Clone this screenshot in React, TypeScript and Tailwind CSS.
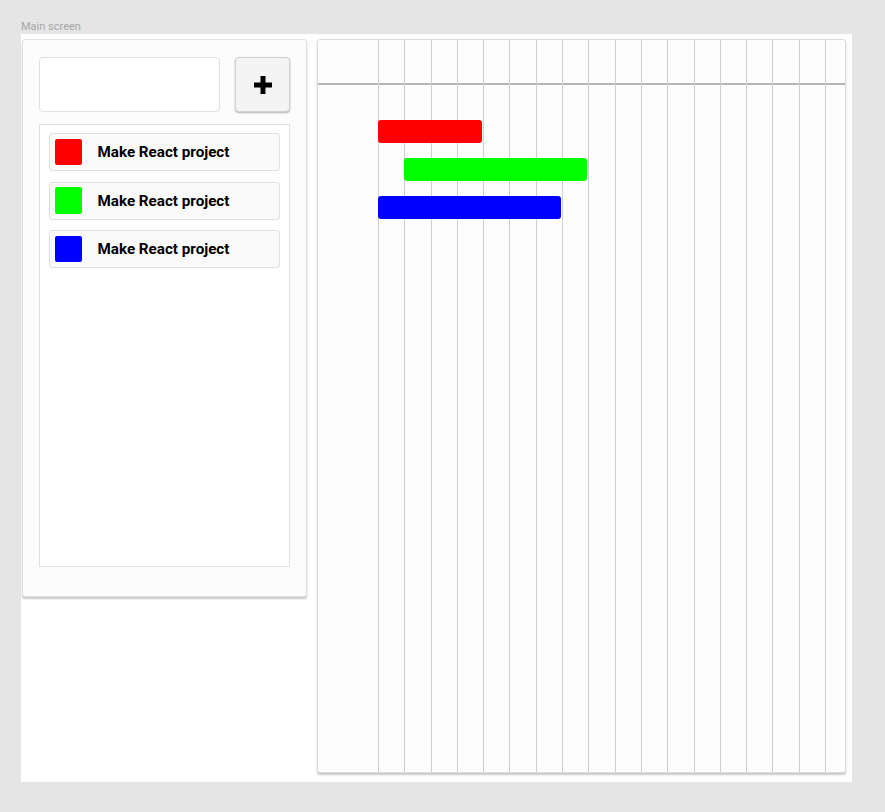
import React from "react";

const tasks = [
  { color: "#ff0000", name: "Make React project", start: 0, len: 4 },
  { color: "#00ff00", name: "Make React project", start: 1, len: 7 },
  { color: "#0000ff", name: "Make React project", start: 0, len: 7 },
];

const COL = 26.3;
const cols = Array.from({ length: 18 }, (_, i) => i);

export default function App() {
  return (
    <div
      className="w-[885px] h-[812px] bg-[#e5e5e5] pt-[20px]"
      style={{ fontFamily: "Roboto, 'Liberation Sans', sans-serif" }}
    >
      <div className="ml-[21px] h-[14px] text-[11px] leading-[14px] text-[#a6a6a6]">
        Main screen
      </div>
      <div className="ml-[21px] w-[831px] h-[748px] bg-white flex items-start pt-[5px] pl-[1px] gap-[10px]">
        {/* Left panel */}
        <div className="w-[285px] h-[558px] bg-[#fcfcfc] border border-[#e2e2e2] rounded-[3px] shadow-[0_2px_2px_rgba(0,0,0,0.22)] px-[16px] pt-[17px]">
          <div className="flex gap-[15px]">
            <div className="w-[181px] h-[55px] bg-white border border-[#e0e0e0] rounded-[4px]" />
            <button className="w-[55px] h-[55px] bg-[#f4f4f4] border border-[#cfcfcf] rounded-[4px] shadow-[0_1px_2px_rgba(0,0,0,0.3)] flex items-center justify-center">
              <svg width="18" height="18" viewBox="0 0 18 18">
                <rect x="6.5" y="0" width="5" height="18" fill="#000" />
                <rect x="0" y="6.5" width="18" height="5" fill="#000" />
              </svg>
            </button>
          </div>
          <div className="mt-[12px] w-[251px] h-[443px] bg-white border border-[#e0e0e0] px-[9px] pt-[8px] flex flex-col gap-[10.5px]">
            {tasks.map((t, i) => (
              <div
                key={i}
                className="h-[38px] bg-[#fafafa] border border-[#e0e0e0] rounded-[3px] flex items-center pl-[5px]"
              >
                <div
                  className="w-[26.5px] h-[26.5px] rounded-[2px] shrink-0"
                  style={{ backgroundColor: t.color }}
                />
                <span className="ml-[16px] pt-[1px] text-[15.2px] font-bold text-black">
                  {t.name}
                </span>
              </div>
            ))}
          </div>
        </div>

        {/* Right panel: gantt */}
        <div className="relative w-[529px] h-[734px] bg-[#fdfdfd] border border-[#dadada] rounded-[3px] shadow-[0_2px_2px_rgba(0,0,0,0.22)] overflow-hidden flex">
          <div className="w-[60px] shrink-0 flex flex-col">
            <div className="h-[45px] border-b-2 border-[#b5b5b5]" />
            <div className="flex-1" />
          </div>
          {cols.map((c) => (
            <div
              key={c}
              className="w-[26.3px] shrink-0 flex flex-col border-l border-[#cfcfcf]"
            >
              <div className="h-[45px] border-b-2 border-[#b5b5b5]" />
              <div className="flex-1" />
            </div>
          ))}
          {tasks.map((t, i) => (
            <div
              key={i}
              className="absolute h-[23px] rounded-[3px]"
              style={{
                backgroundColor: t.color,
                top: 80 + i * 38,
                left: 60 + t.start * COL,
                width: t.len * COL - 1,
              }}
            />
          ))}
        </div>
      </div>
    </div>
  );
}
